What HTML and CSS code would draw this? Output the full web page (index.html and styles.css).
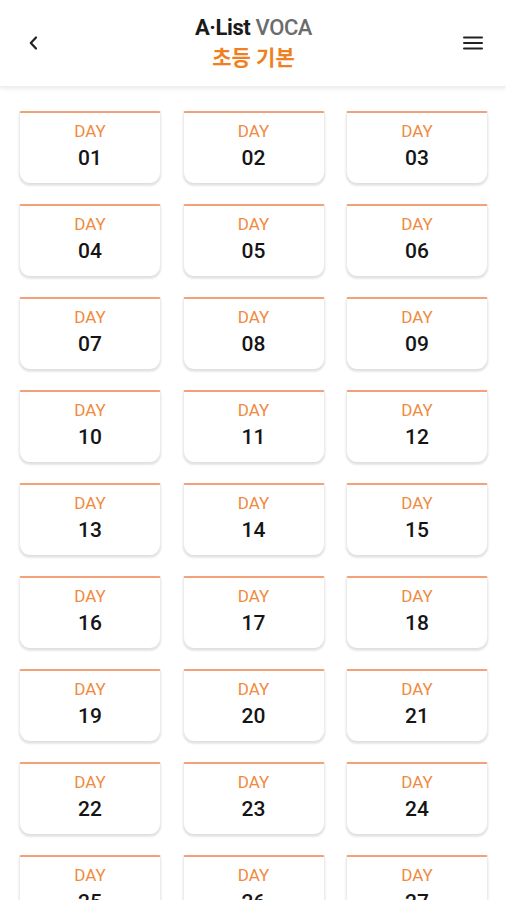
FILE: index.html
```html
<!DOCTYPE html>
<html lang="ko">
<head>
    <meta charset="UTF-8">
    <meta name="viewport" content="width=device-width, initial-scale=1.0">
    <title>A·List VOCA - 초등 기본</title>
    <link rel="stylesheet" href="styles.css">
</head>
<body>

    <header class="topbar">
        <button class="icon-btn back" aria-label="back">
            <svg width="14" height="16" viewBox="0 0 14 16"><path d="M9 2.5 L3.8 8 L9 13.5" fill="none" stroke="#222" stroke-width="2.2" stroke-linecap="round" stroke-linejoin="round"/></svg>
        </button>
        <div class="title">
            <div class="brand"><b>A·List</b> <span>VOCA</span></div>
            <div class="course">초등 기본</div>
        </div>
        <button class="icon-btn menu" aria-label="menu">
            <svg width="20" height="16" viewBox="0 0 20 16"><path d="M1 2.5 H19 M1 8 H19 M1 13.5 H19" stroke="#222" stroke-width="2" stroke-linecap="round"/></svg>
        </button>
    </header>

    <div class="days" id="days"></div>

    <script>
        // 30 days of lessons
        const daysDiv = document.getElementById('days');
        let html = '';
        for (let i = 1; i <= 30; i++) {
            const num = String(i).padStart(2, '0');
            html += `
                <div class="day-card">
                    <span class="day-label">DAY</span>
                    <span class="day-num">${num}</span>
                </div>`;
        }
        daysDiv.innerHTML = html;
    </script>
</body>
</html>
```

FILE: styles.css
```css
* {
    margin: 0;
    padding: 0;
    box-sizing: border-box;
}

body {
    font-family: Roboto, "Noto Sans CJK KR", "Liberation Sans", sans-serif;
    background-color: #fff;
    overflow: hidden;
}

.topbar {
    height: 87px;
    background: #fff;
    display: flex;
    align-items: center;
    justify-content: space-between;
    padding: 0 21px 0 22px;
    box-shadow: 0 2px 4px rgba(0,0,0,0.08);
    border-bottom: 1px solid #eee;
    position: relative;
}

.icon-btn {
    background: none;
    border: none;
    width: 24px;
    height: 24px;
    display: flex;
    align-items: center;
    justify-content: center;
    cursor: pointer;
}

.title {
    text-align: center;
    padding-top: 1px;
}

.brand {
    font-size: 22px;
    line-height: 28px;
    letter-spacing: -0.4px;
    color: #1a1a1a;
}

.brand b {
    font-weight: 700;
}

.brand span {
    color: #6c6c6c;
    font-weight: 500;
}

.course {
    font-size: 21px;
    line-height: 30px;
    font-weight: 700;
    color: #f07f22;
    margin-top: 1px;
}

.days {
    display: grid;
    grid-template-columns: repeat(3, 1fr);
    column-gap: 21.5px;
    row-gap: 21px;
    padding: 24px 18px 24px 19px;
}

.day-card {
    height: 72px;
    background: #fff;
    border-top: 2px solid #f3a179;
    border-left: 1px solid #ececec;
    border-right: 1px solid #ececec;
    border-radius: 2px 2px 11px 11px;
    box-shadow: 0 3px 2px rgba(0,0,0,0.09), 0 1px 3px rgba(0,0,0,0.06);
    display: flex;
    flex-direction: column;
    align-items: center;
    padding-top: 8px;
}

.day-label {
    font-size: 17px;
    line-height: 20px;
    color: #f08a3e;
    font-weight: 400;
}

.day-num {
    font-size: 21px;
    line-height: 28px;
    color: #151515;
    font-weight: 500;
    margin-top: 3px;
}
```
